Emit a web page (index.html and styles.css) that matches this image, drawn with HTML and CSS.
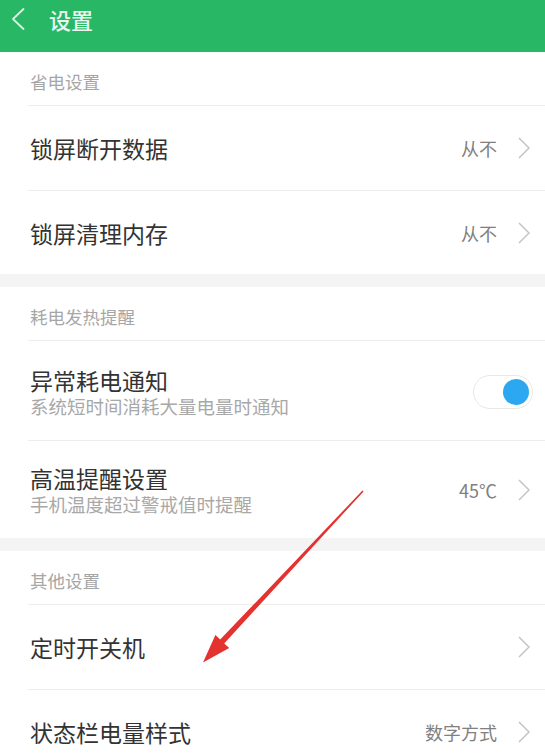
FILE: index.html
```html
<!DOCTYPE html>
<html lang="zh">
<head>
<meta charset="utf-8">
<title>设置</title>
<link rel="stylesheet" href="styles.css">
</head>
<body>
<div class="page">
  <header class="topbar">
    <svg class="back" width="14" height="22" viewBox="0 0 14 22"><path d="M12.5 1 L2 11 L12.5 21" fill="none" stroke="#d9f2e2" stroke-width="1.8" stroke-linejoin="round" stroke-linecap="round"/></svg>
    <span class="title">设置</span>
  </header>

  <section class="group">
    <div class="sec-head"><span>省电设置</span></div>
    <div class="row">
      <span class="label">锁屏断开数据</span>
      <span class="right"><span class="value">从不</span><svg class="chev" width="12" height="22" viewBox="0 0 12 22"><path d="M1 1 L11 11 L1 21" fill="none" stroke="#c4c4c4" stroke-width="1.5"/></svg></span>
    </div>
    <div class="row last">
      <span class="label">锁屏清理内存</span>
      <span class="right"><span class="value">从不</span><svg class="chev" width="12" height="22" viewBox="0 0 12 22"><path d="M1 1 L11 11 L1 21" fill="none" stroke="#c4c4c4" stroke-width="1.5"/></svg></span>
    </div>
  </section>
  <div class="band"></div>

  <section class="group">
    <div class="sec-head"><span>耗电发热提醒</span></div>
    <div class="row tall">
      <div class="texts">
        <span class="label">异常耗电通知</span>
        <span class="sub">系统短时间消耗大量电量时通知</span>
      </div>
      <span class="toggle"><span class="knob"></span></span>
    </div>
    <div class="row tall last">
      <div class="texts">
        <span class="label">高温提醒设置</span>
        <span class="sub">手机温度超过警戒值时提醒</span>
      </div>
      <span class="right"><span class="value">45℃</span><svg class="chev" width="12" height="22" viewBox="0 0 12 22"><path d="M1 1 L11 11 L1 21" fill="none" stroke="#c4c4c4" stroke-width="1.5"/></svg></span>
    </div>
  </section>
  <div class="band"></div>

  <section class="group">
    <div class="sec-head"><span>其他设置</span></div>
    <div class="row">
      <span class="label">定时开关机</span>
      <span class="right"><svg class="chev" width="12" height="22" viewBox="0 0 12 22"><path d="M1 1 L11 11 L1 21" fill="none" stroke="#c4c4c4" stroke-width="1.5"/></svg></span>
    </div>
    <div class="row">
      <span class="label">状态栏电量样式</span>
      <span class="right"><span class="value">数字方式</span><svg class="chev" width="12" height="22" viewBox="0 0 12 22"><path d="M1 1 L11 11 L1 21" fill="none" stroke="#c4c4c4" stroke-width="1.5"/></svg></span>
    </div>
  </section>

  <svg class="arrow" width="545" height="753" viewBox="0 0 545 753">
    <polygon points="363.6,491.4 224.2,643.4 229.2,648 203,662.5 215.4,635 220.2,639.6 362.4,490.6" fill="#e4322f"/>
  </svg>
</div>
</body>
</html>
```

FILE: styles.css
```css
* { box-sizing: border-box; }
html, body { margin: 0; padding: 0; }
body {
  background: #ffffff;
  font-family: "Noto Sans CJK SC", "Noto Sans", "Liberation Sans", sans-serif;
  color: #333333;
}
.page {
  position: relative;
  width: 545px;
  height: 753px;
  overflow: hidden;
}
.topbar {
  height: 52px;
  background: #28b765;
  display: flex;
  align-items: flex-start;
  padding: 5px 0 0 11px;
}
.back { margin-top: 3px; }
.title {
  margin-left: 24px;
  font-size: 22px;
  line-height: 28px;
  color: #e9f7ee;
  font-weight: 500;
}
.group { background: #ffffff; }
.sec-head {
  margin-left: 28px;
  height: 54px;
  border-bottom: 1px solid #ededed;
  padding: 18px 0 0 2px;
  font-size: 17.5px;
  line-height: 24px;
  color: #a6a6a6;
}
.row {
  margin-left: 28px;
  height: 85px;
  border-bottom: 1px solid #ededed;
  display: flex;
  align-items: center;
  justify-content: space-between;
  padding: 0 15px 0 2px;
}
.row.last { border-bottom: none; height: 83px; }
.row.tall { height: 100px; padding-top: 2px; }
.row.tall.last { height: 97px; padding-top: 0; }
.label {
  font-size: 23px;
  line-height: 28px;
  color: #333333;
}
.texts { display: flex; flex-direction: column; }
.sub {
  font-size: 18.5px;
  line-height: 24px;
  color: #a8a8a8;
}
.right { display: flex; align-items: center; }
.value {
  font-size: 18px;
  line-height: 24px;
  color: #808080;
  margin-right: 21px;
}
.chev { display: block; }
.toggle {
  width: 60px;
  height: 34px;
  border-radius: 17px;
  border: 1px solid #e8e8e8;
  background: #ffffff;
  margin-right: -3px;
  display: flex;
  align-items: center;
  justify-content: flex-end;
  padding-right: 3px;
}
.knob {
  width: 26px;
  height: 26px;
  border-radius: 50%;
  background: #2ba8ef;
}
.band { height: 13px; background: #f4f4f4; }
.arrow {
  position: absolute;
  left: 0;
  top: 0;
  pointer-events: none;
}
```
